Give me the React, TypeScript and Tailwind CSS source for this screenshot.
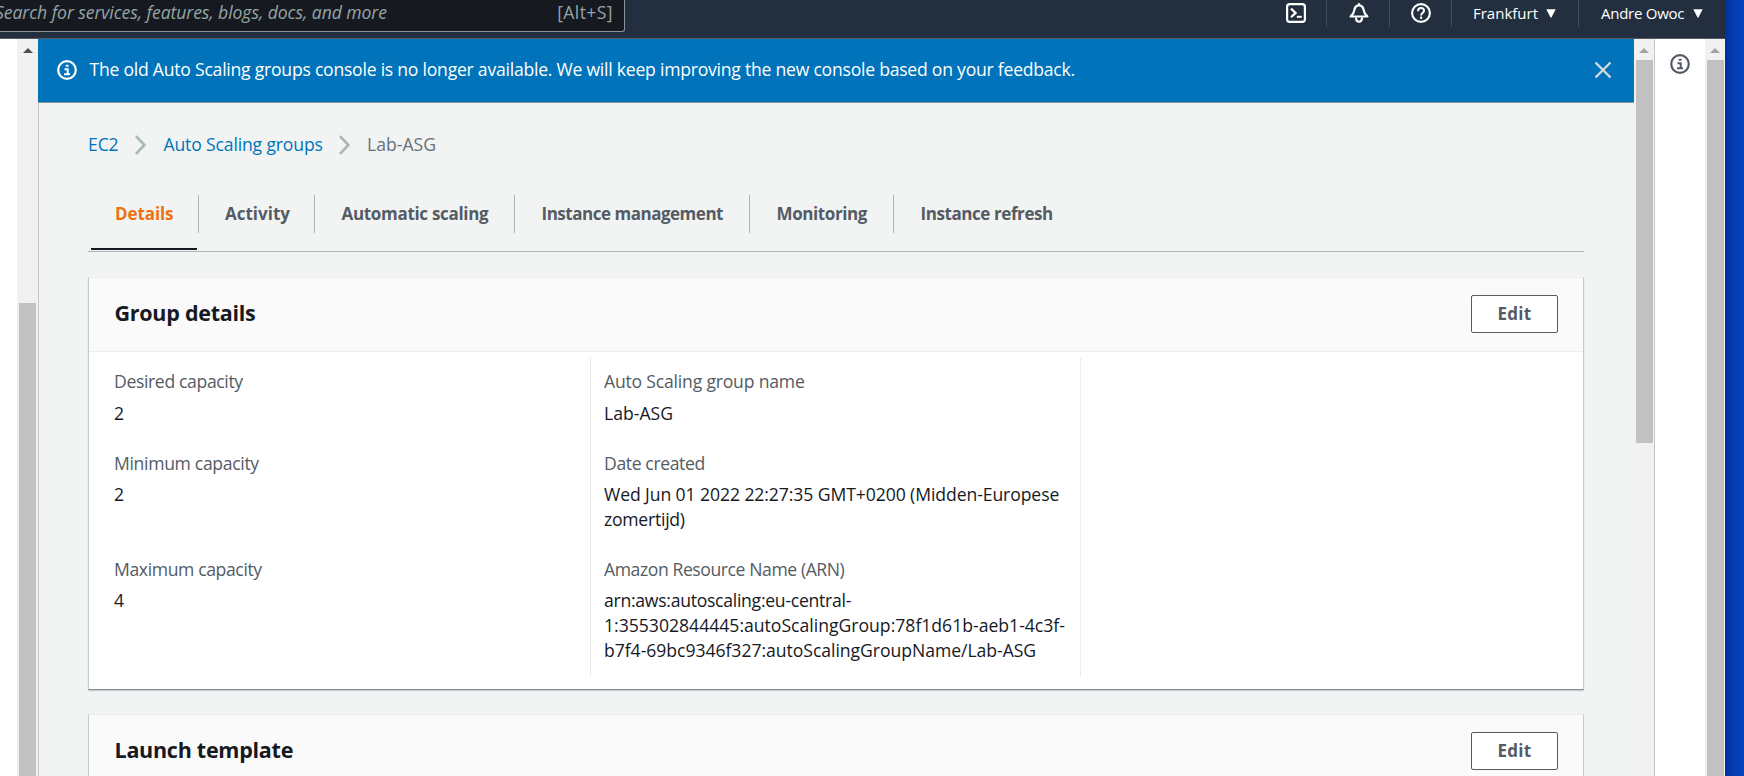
import React from "react";

type IconProps = { className?: string };

const InfoIcon = ({ className }: IconProps) => (
  <svg viewBox="0 0 20 20" className={`h-5 w-5 shrink-0 ${className ?? ""}`} fill="none" stroke="currentColor">
    <circle cx="10" cy="10" r="8.8" strokeWidth="2.2" />
    <path d="M8.7 5.8h2.9M7.5 9.2h3.2v4.6M7 14.2h6" strokeWidth="2" />
  </svg>
);

const TerminalIcon = () => (
  <svg viewBox="0 0 20 20" className="h-5 w-5" fill="none" stroke="currentColor">
    <rect x="1.1" y="1.1" width="17.8" height="17.8" rx="2.6" strokeWidth="2.2" />
    <path d="M5 5.6l4.6 4.3L5 14.2" strokeWidth="2.2" />
    <path d="M10.8 13.8h5" strokeWidth="2" />
  </svg>
);

const BellIcon = () => (
  <svg viewBox="0 0 20 20" className="h-5 w-5" fill="none" stroke="currentColor" strokeLinejoin="round">
    <path d="M10 0.2v2" strokeWidth="2.4" />
    <path
      d="M1.6 13.5h16.8c-2-1.5-3.2-3.3-3.6-5.9C14.3 4.4 12.6 2.4 10 2.4S5.7 4.4 5.2 7.6C4.8 10.2 3.6 12 1.6 13.5z"
      strokeWidth="2.2"
    />
    <path d="M7 14.5c0 5.6 6 5.6 6 0" strokeWidth="2.2" />
  </svg>
);

const HelpIcon = () => (
  <svg viewBox="0 0 20 20" className="h-5 w-5" fill="none" stroke="currentColor">
    <circle cx="10" cy="10" r="8.9" strokeWidth="2.1" />
    <path d="M7 8.2C7 4 13.1 4.2 13.1 7.6 13.1 9.7 10.1 9.7 10.1 12.4" strokeWidth="2" />
    <path d="M10.1 13.6v2.2" strokeWidth="2.2" />
  </svg>
);

const Caret = () => (
  <svg viewBox="0 0 10 9" className="h-[9px] w-2.5 shrink-0" fill="currentColor">
    <path d="M0.3 0.3h9.4L5.6 8.3q-0.6 0.8-1.2 0z" />
  </svg>
);

const Chevron = () => (
  <svg viewBox="0 0 11 20" className="mt-0.5 h-5 w-[11px]" fill="none" stroke="#aab7b8" strokeWidth="2.6">
    <path d="M1 1.2l8.4 8.8L1 18.8" />
  </svg>
);

const UpArrow = ({ className }: IconProps) => (
  <svg viewBox="0 0 10 5" className={`mt-[9px] h-[5px] w-2.5 shrink-0 ${className ?? ""}`} fill="currentColor">
    <path d="M5 0L10 5H0z" />
  </svg>
);

const HeaderDivider = () => <div className="h-[27px] w-px shrink-0 bg-[#414d5c]" />;

const TopBar = () => (
  <header className="flex h-[39px] w-full items-start border-b border-[#545b64] bg-[#232f3e] text-white">
    <div className="flex h-8 w-[625px] shrink-0 items-start justify-between rounded-br-[3px] border-r border-b border-[#879596] bg-[#16191f] pr-[11px] leading-[25px] text-[#95a5a6]">
      <span className="-ml-[5px] whitespace-nowrap italic tracking-[-0.08px]">
        Search for services, features, blogs, docs, and more
      </span>
      <span className="tracking-[0.4px]">[Alt+S]</span>
    </div>
    <div className="flex-1" />
    <div className="flex h-[27px] w-[60px] items-start justify-center pt-[3px]"><TerminalIcon /></div>
    <HeaderDivider />
    <div className="flex h-[27px] w-[62px] items-start justify-center pt-[3px] pl-px"><BellIcon /></div>
    <HeaderDivider />
    <div className="flex h-[27px] w-[61px] items-start justify-center pt-[3px]"><HelpIcon /></div>
    <HeaderDivider />
    <div className="flex h-[27px] w-[126px] items-center pl-[21px] text-[15px] font-medium">
      <span className="w-[73px] shrink-0 pb-px">Frankfurt</span>
      <Caret />
    </div>
    <HeaderDivider />
    <div className="flex h-[27px] w-[146px] items-center pl-[22px] text-[15px] font-medium">
      <span className="w-[92px] shrink-0 pb-px whitespace-nowrap tracking-[-0.26px]">Andre Owoc</span>
      <Caret />
    </div>
  </header>
);

const Banner = () => (
  <div className="flex h-16 shrink-0 items-center border-b border-[#879596] bg-[#0073bb] pr-[22px] pb-px pl-[19px] text-white">
    <InfoIcon />
    <span className="flex-1 pb-px pl-[12.5px] font-medium whitespace-nowrap tracking-[-0.24px]">
      The old Auto Scaling groups console is no longer available. We will keep improving the new console based on your
      feedback.
    </span>
    <svg viewBox="0 0 18 18" className="h-[18px] w-[18px]" fill="none" stroke="#d5dbdb" strokeWidth="2.4">
      <path d="M1.5 1.5l15 15M16.5 1.5l-15 15" />
    </svg>
  </div>
);

const tabs = [
  { label: "Automatic scaling", cls: "w-[200px] border-r tracking-[-0.31px]" },
  { label: "Instance management", cls: "w-[235px] border-r tracking-[-0.48px]" },
  { label: "Monitoring", cls: "w-[144px] border-r tracking-[-0.4px]" },
  { label: "Instance refresh", cls: "tracking-[-0.42px]" },
];

const Tabs = () => (
  <nav className="mt-[39px] h-[57px] shrink-0 border-b border-[#aab7b8] text-[17px] font-bold text-[#545b64]">
    <div className="flex h-[38px] leading-[38px]">
      <div className="w-[111px] border-r border-[#aab7b8] pl-[27px] tracking-[-0.1px] text-[#ec7211]">Details</div>
      <div className="w-[116px] border-r border-[#aab7b8] pl-[26px]">Activity</div>
      {tabs.map((t) => (
        <div key={t.label} className={`border-[#aab7b8] pl-[26.5px] whitespace-nowrap ${t.cls}`}>
          {t.label}
        </div>
      ))}
    </div>
    <div className="mt-[15px] ml-[3px] h-0.5 w-[106px] bg-[#16191f]" />
  </nav>
);

type CardProps = { title: string; className: string; children?: React.ReactNode };

const Card = ({ title, className, children }: CardProps) => (
  <section className={`shrink-0 border-x border-t border-x-[#c3cacd] border-t-[#eaeded] bg-white ${className}`}>
    <div className="flex h-[74px] items-center justify-between border-b border-[#eaeded] bg-[#fafafa] pr-[25px] pb-px pl-[25.5px]">
      <h2 className="pb-[3px] text-[21.5px] leading-7 font-bold tracking-[-0.26px] text-[#16191f]">{title}</h2>
      <button className="h-[38px] w-[87px] rounded-[2px] border border-[#545b64] bg-white text-[17px] font-bold tracking-[0.3px] text-[#545b64]">
        Edit
      </button>
    </div>
    {children}
  </section>
);

const Label = ({ children, className }: { children: React.ReactNode; className?: string }) => (
  <dt className={`whitespace-nowrap text-[#545b64] ${className ?? ""}`}>{children}</dt>
);

const GroupDetails = () => (
  <div className="flex pt-1.5 leading-[25px] text-[#16191f]">
    <dl className="h-[319px] w-[502px] border-r border-[#eaeded] pt-[11px] pl-[25px]">
      <div className="h-[82px]">
        <Label className="tracking-[-0.36px]">Desired capacity</Label>
        <dd className="mt-[7px]">2</dd>
      </div>
      <div className="h-[106px]">
        <Label className="tracking-[-0.33px]">Minimum capacity</Label>
        <dd className="mt-1.5">2</dd>
      </div>
      <Label className="tracking-[-0.38px]">Maximum capacity</Label>
      <dd className="mt-1.5">4</dd>
    </dl>
    <dl className="h-[319px] w-[490px] border-r border-[#eaeded] pt-[11px] pl-[13px]">
      <div className="h-[82px]">
        <Label className="tracking-[-0.2px]">Auto Scaling group name</Label>
        <dd className="mt-[7px]">Lab-ASG</dd>
      </div>
      <div className="h-[106px]">
        <Label className="tracking-[-0.38px]">Date created</Label>
        <dd className="mt-1.5 whitespace-nowrap">
          <span className="tracking-[-0.09px]">Wed Jun 01 2022 22:27:35 GMT+0200 (Midden-Europese</span>
          <br />
          <span className="tracking-[-0.25px]">zomertijd)</span>
        </dd>
      </div>
      <Label className="tracking-[-0.42px]">Amazon Resource Name (ARN)</Label>
      <dd className="mt-1.5 whitespace-nowrap">
        <span className="tracking-[-0.27px]">arn:aws:autoscaling:eu-central-</span>
        <br />
        <span>1:355302844445:autoScalingGroup:78f1d61b-aeb1-4c3f-</span>
        <br />
        <span className="tracking-[-0.04px]">b7f4-69bc9346f327:autoScalingGroupName/Lab-ASG</span>
      </dd>
    </dl>
  </div>
);

export default function App() {
  return (
    <div className="flex h-[776px] w-[1744px] overflow-hidden bg-[#0440b8] font-['Open_Sans',sans-serif] text-[17.6px]">
      <div className="flex w-[1725px] shrink-0 flex-col">
        <TopBar />
        <div className="flex h-[737px] bg-white">
          <div className="ml-[17px] flex w-[21px] shrink-0 flex-col items-center bg-[#f1f1f1]">
            <UpArrow className="text-[#505050]" />
            <div className="mt-[250px] mr-px w-[17px] flex-1 bg-[#c1c1c1]" />
          </div>
          <main className="flex w-[1596px] shrink-0 flex-col overflow-hidden bg-[#f2f3f3]">
            <Banner />
            <div className="flex flex-1 flex-col overflow-hidden border-l border-[#c0c6ca] pr-[50px] pl-[49px]">
              <div className="mt-[29px] flex h-6 shrink-0 items-center whitespace-nowrap text-[#0073bb]">
                <span className="w-[47px] tracking-[-0.13px]">EC2</span>
                <Chevron />
                <span className="w-[177px] pl-[17.5px] tracking-[-0.16px]">Auto Scaling groups</span>
                <span className="ml-4 flex"><Chevron /></span>
                <span className="pl-[17px] text-[#687078]">Lab-ASG</span>
              </div>
              <Tabs />
              <Card title="Group details" className="mt-[25px] h-[413px] border-b border-b-[#879196] shadow-[0_1px_1px_0_#c3ccd0]">
                <GroupDetails />
              </Card>
              <Card title="Launch template" className="mt-6 h-[120px]" />
            </div>
          </main>
          <div className="flex w-5 shrink-0 flex-col items-center bg-[#f1f1f1]">
            <UpArrow className="text-[#a3a3a3]" />
            <div className="mt-[7px] ml-px h-[383px] w-[17px] bg-[#c1c1c1]" />
          </div>
          <div className="flex w-[51px] shrink-0 items-start border-l border-[#c0c6ca] pt-[15px] pl-[15px] text-[#545b64]">
            <InfoIcon />
          </div>
          <div className="flex w-5 shrink-0 flex-col items-center bg-[#f1f1f1]">
            <UpArrow className="text-[#a3a3a3]" />
            <div className="mt-[7px] ml-px w-[17px] flex-1 bg-[#c1c1c1]" />
          </div>
        </div>
      </div>
      <div className="w-[19px] bg-linear-to-r from-[#00309c] via-[#043db4] to-[#0442bd]" />
    </div>
  );
}
